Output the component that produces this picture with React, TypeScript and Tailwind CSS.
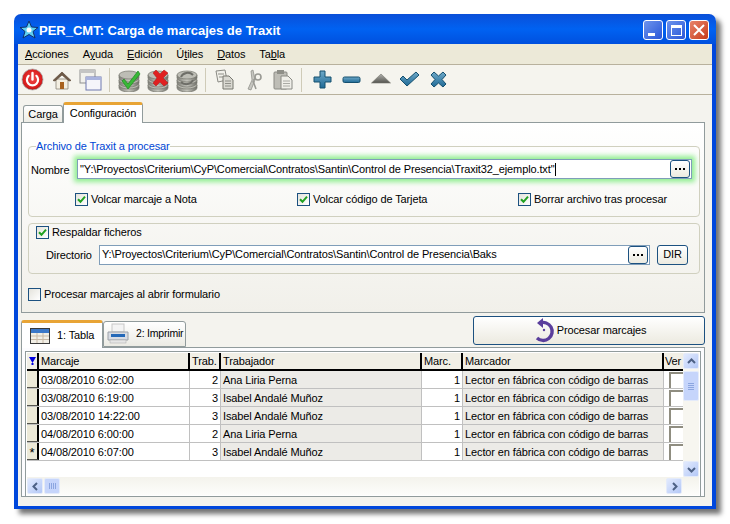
import React from "react";

const rows = [
	["03/08/2010 6:02:00", "2", "Ana Liria Perna"],
	["03/08/2010 6:19:00", "3", "Isabel Andalé Muñoz"],
	["03/08/2010 14:22:00", "3", "Isabel Andalé Muñoz"],
	["04/08/2010 6:00:00", "2", "Ana Liria Perna"],
	["04/08/2010 6:07:00", "3", "Isabel Andalé Muñoz"],
];

const cols = "grid grid-cols-[12px_151px_31px_201px_41px_201px_20px]";

const Check = ({ checked = true }: { checked?: boolean }) => (
	<span className="flex h-[13px] w-[13px] shrink-0 items-center justify-center border border-[#1C5180] bg-gradient-to-br from-[#E4E3DC] to-white">
		{checked && (
			<svg width="9" height="9" viewBox="0 0 9 9">
				<path d="M1 4.2 L3.5 6.8 L8 1.6" fill="none" stroke="#21A121" strokeWidth="2" />
			</svg>
		)}
	</span>
);

const Dots = () => (
	<span className="flex h-[18px] w-[20px] shrink-0 items-center justify-center gap-[2px] rounded-[3px] border border-[#1C5180] bg-gradient-to-b from-white to-[#ECEAE0]">
		<i className="h-[2px] w-[2px] bg-black" />
		<i className="h-[2px] w-[2px] bg-black" />
		<i className="h-[2px] w-[2px] bg-black" />
	</span>
);

const DbStack = ({ children }: { children?: React.ReactNode }) => (
	<svg width="24" height="24" viewBox="0 0 24 24">
		<defs>
			<linearGradient id="dbg" x1="0" x2="1" y1="0" y2="0">
				<stop offset="0" stopColor="#7E7E78" />
				<stop offset="0.5" stopColor="#C4C4BC" />
				<stop offset="1" stopColor="#6E6E68" />
			</linearGradient>
		</defs>
		{[15, 10, 5].map((y) => (
			<g key={y}>
				<path d={`M2 ${y + 2} v3 a10 4 0 0 0 20 0 v-3 z`} fill="url(#dbg)" stroke="#77776F" strokeWidth="0.7" />
				<ellipse cx="12" cy={y + 2} rx="10" ry="4" fill="#BDBDB5" stroke="#77776F" strokeWidth="0.7" />
			</g>
		))}
		{children}
	</svg>
);

const BlueDefs = () => (
	<defs>
		<linearGradient id="blu" x1="0" x2="0" y1="0" y2="1">
			<stop offset="0" stopColor="#6FA9C8" />
			<stop offset="1" stopColor="#1F6A96" />
		</linearGradient>
	</defs>
);

const Sep = () => <span className="mx-[4px] h-[24px] w-px bg-[#CFCBB8]" />;

const Tool = ({ children }: { children: React.ReactNode }) => (
	<span className="flex h-[26px] w-[29px] items-center justify-center">{children}</span>
);

const Toolbar = () => (
	<div className="flex h-[30px] items-center border-b border-[#B8B19D] bg-[#F5F4EE]">
		<Tool>
			<svg width="23" height="23" viewBox="0 0 23 23">
				<defs>
					<radialGradient id="pw" cx="0.5" cy="0.45" r="0.6">
						<stop offset="0" stopColor="#F04A4A" />
						<stop offset="0.75" stopColor="#D81C1C" />
						<stop offset="1" stopColor="#8E1010" />
					</radialGradient>
				</defs>
				<circle cx="11.5" cy="11.5" r="10.5" fill="url(#pw)" stroke="#A8A8A8" strokeWidth="0.8" />
				<path d="M7.6 7.8 a5.6 5.6 0 1 0 7.8 0" fill="none" stroke="#fff" strokeWidth="2.2" strokeLinecap="round" />
				<path d="M11.5 5 v6.5" stroke="#fff" strokeWidth="2.4" strokeLinecap="round" />
			</svg>
		</Tool>
		<Tool>
			<svg width="20" height="20" viewBox="0 0 20 20">
				<path d="M4 9 h12 v10 h-12 z" fill="#F4EFE2" stroke="#8B8578" strokeWidth="0.8" />
				<path d="M1 10.5 L10 2 L19 10.5 L17 11 L10 5 L3 11 z" fill="#6E5A48" stroke="#5E4A3A" strokeWidth="0.7" />
				<rect x="8" y="12" width="4" height="7" fill="#A8611E" />
			</svg>
		</Tool>
		<Tool>
			<svg width="23" height="22" viewBox="0 0 23 22">
				<rect x="1" y="1" width="15" height="13" fill="#F2F1EC" stroke="#8F8F8F" />
				<rect x="1" y="1" width="15" height="3" fill="#C4C4C4" />
				<rect x="7" y="8" width="15" height="13" fill="#F5F5FA" stroke="#6F78B0" />
				<rect x="7" y="8" width="15" height="3" fill="#A9B3DE" />
			</svg>
		</Tool>
		<Sep />
		<Tool>
			<DbStack>
				<path d="M7 11 L11 16 L21 3 L23 6 L11 21 L5 13 z" fill="#38B838" stroke="#1E8A1E" strokeWidth="0.7" />
			</DbStack>
		</Tool>
		<Tool>
			<DbStack>
				<path d="M7 5 L10 2 L14 6 L18 2 L22 5 L17 10 L22 15 L18 18 L14 14 L10 18 L7 15 L11 10 z" fill="#E02020" stroke="#B01414" strokeWidth="0.5" />
			</DbStack>
		</Tool>
		<Tool>
			<DbStack>
				<path d="M6 9 a7 6 0 0 1 12 -2 M18 12 a7 6 0 0 1 -12 2" fill="none" stroke="#6E6E68" strokeWidth="2" />
			</DbStack>
		</Tool>
		<Sep />
		<Tool>
			<svg width="20" height="21" viewBox="0 0 20 21">
				<path d="M1 2 L10 1 L12 11 L3 13 z" fill="#F1F0EA" stroke="#8A8A84" />
				<path d="M8 7 h6 l4 4 v9 h-10 z" fill="#DAD9D2" stroke="#77776F" />
				<path d="M10 12 h6 M10 14.5 h6 M10 17 h6 M3 5 h6 M4 8 h4" stroke="#8F8F88" />
			</svg>
		</Tool>
		<Tool>
			<svg width="16" height="22" viewBox="0 0 16 22">
				<path d="M7 1 L9 11 L5 21 L2 20 L6 11 L5 2 z" fill="#C6C6C0" stroke="#8A8A84" strokeWidth="0.7" />
				<circle cx="12" cy="8" r="3" fill="none" stroke="#9A9A94" strokeWidth="1.6" />
				<path d="M9.5 9.5 L7 11.5 M7 12 L10 20" stroke="#9A9A94" strokeWidth="1.6" />
			</svg>
		</Tool>
		<Tool>
			<svg width="20" height="21" viewBox="0 0 20 21">
				<rect x="1" y="3" width="13" height="17" rx="1" fill="#BEBDB6" stroke="#8A8A84" />
				<rect x="4" y="1" width="7" height="4" fill="#8F8F88" />
				<path d="M8 7 h7 l4 4 v9 h-11 z" fill="#F0EFE9" stroke="#8A8A84" />
				<path d="M10 12 h7 M10 14.5 h7 M10 17 h7" stroke="#AAAAA4" />
			</svg>
		</Tool>
		<Sep />
		<span className="w-[2px]" />
		<Tool>
			<svg width="19" height="19" viewBox="0 0 19 19">
				<BlueDefs />
				<path d="M7 1 h5 v6 h6 v5 h-6 v6 h-5 v-6 h-6 v-5 h6 z" fill="url(#blu)" stroke="#15506F" strokeLinejoin="round" />
			</svg>
		</Tool>
		<Tool>
			<svg width="19" height="19" viewBox="0 0 19 19">
				<rect x="1" y="7" width="17" height="5.5" rx="1.5" fill="url(#blu)" stroke="#15506F" />
			</svg>
		</Tool>
		<Tool>
			<svg width="20" height="19" viewBox="0 0 20 19">
				<defs>
					<linearGradient id="tri" x1="0" x2="0" y1="0" y2="1">
						<stop offset="0" stopColor="#B0B0AC" />
						<stop offset="1" stopColor="#55554F" />
					</linearGradient>
				</defs>
				<path d="M10 4 L19.5 13 H0.5 z" fill="url(#tri)" stroke="#77776F" strokeWidth="0.6" strokeLinejoin="round" />
			</svg>
		</Tool>
		<Tool>
			<svg width="21" height="19" viewBox="0 0 21 19">
				<path d="M1 9 L4 6 L8 10 L17 2 L20 5 L8 16 z" fill="url(#blu)" stroke="#15506F" strokeLinejoin="round" />
			</svg>
		</Tool>
		<Tool>
			<svg width="17" height="17" viewBox="0 0 17 17">
				<path d="M4 1 L8.5 5 L13 1 L16 4 L12 8.5 L16 13 L13 16 L8.5 12 L4 16 L1 13 L5 8.5 L1 4 z" fill="url(#blu)" stroke="#15506F" strokeLinejoin="round" />
			</svg>
		</Tool>
	</div>
);

const ScrollBtn = ({ d }: { d: string }) => (
	<span className="flex h-[16px] w-[16px] shrink-0 items-center justify-center rounded-[2px] border border-[#E4EBFA] bg-gradient-to-br from-[#E2EAFE] to-[#B4C8F6]">
		<svg width="9" height="9" viewBox="0 0 9 9">
			<path d={d} fill="none" stroke="#4D6185" strokeWidth="2" />
		</svg>
	</span>
);

const Grip = ({ vertical = false }: { vertical?: boolean }) =>
	vertical ? (
		<span className="flex flex-col gap-px">
			<i className="h-px w-[6px] bg-[#8CA6E0]" />
			<i className="h-px w-[6px] bg-[#8CA6E0]" />
			<i className="h-px w-[6px] bg-[#8CA6E0]" />
			<i className="h-px w-[6px] bg-[#8CA6E0]" />
		</span>
	) : (
		<span className="flex gap-px">
			<i className="h-[6px] w-px bg-[#8CA6E0]" />
			<i className="h-[6px] w-px bg-[#8CA6E0]" />
			<i className="h-[6px] w-px bg-[#8CA6E0]" />
			<i className="h-[6px] w-px bg-[#8CA6E0]" />
		</span>
	);

const Head = ({ children }: { children?: React.ReactNode }) => (
	<div className="flex items-center overflow-hidden whitespace-nowrap border-r-2 border-black pl-[2px] leading-none">{children}</div>
);

const Grid = () => (
	<div className="flex h-[146px] flex-col border border-[#919B9C] bg-white p-px">
		<div className="flex h-[124px]">
			<div className="w-[657px] overflow-hidden">
				<div className={`${cols} h-[18px] border-b-2 border-black bg-[#F1EFE6]`}>
					<div className="flex items-center justify-center border-r-2 border-black">
						<svg width="7" height="8" viewBox="0 0 7 8">
							<path d="M0 0 H7 L3.5 6 z M2.5 6 h2 v2 h-2 z" fill="#0000E0" />
						</svg>
					</div>
					<Head>Marcaje</Head>
					<Head>Trab.</Head>
					<Head>Trabajador</Head>
					<Head>Marc.</Head>
					<Head>Marcador</Head>
					<div className="overflow-hidden pl-[1px]">Ver</div>
				</div>
				{rows.map((r, i) => (
					<div key={i} className={`${cols} h-[18px] border-b border-[#C0C0C0]`}>
						<div className="flex items-center justify-center border-r-2 border-b border-r-black border-b-[#55554F] bg-[#ECE9D8] pt-[3px] text-[13px] leading-none">{i === 4 ? "*" : ""}</div>
						<div className="border-r border-[#C0C0C0] pl-[2px] pt-px leading-[16px]">{r[0]}</div>
						<div className="border-r border-[#C0C0C0] pr-[2px] pt-px text-right leading-[16px]">{r[1]}</div>
						<div className="border-r border-[#C0C0C0] bg-[#ECEBE7] pl-[2px] pt-px leading-[16px]">{r[2]}</div>
						<div className="border-r border-[#C0C0C0] pr-[2px] pt-px text-right leading-[16px]">1</div>
						<div className="border-r border-[#C0C0C0] bg-[#ECEBE7] pl-[2px] pt-px leading-[16px]">Lector en fábrica con código de barras</div>
						<div className="pl-[5px] pt-[1px]">
							<span className="block h-[16px] w-[20px] border-l-2 border-t-2 border-[#8F8D80] bg-white" />
						</div>
					</div>
				))}
			</div>
			<div className="flex w-[16px] flex-col bg-[#F7F6F0]">
				<ScrollBtn d="M1 6 L4.5 2.5 L8 6" />
				<div className="mt-[2px] flex h-[30px] items-center justify-center rounded-[2px] border border-[#E4EBFA] bg-[#C6D5FB]">
					<Grip vertical />
				</div>
				<div className="flex-1" />
				<ScrollBtn d="M1 3 L4.5 6.5 L8 3" />
			</div>
		</div>
		<div className="flex h-[18px] items-center bg-gradient-to-b from-[#F4F3EC] to-[#FDFDFB]">
			<ScrollBtn d="M6 1 L2.5 4.5 L6 8" />
			<div className="ml-px flex h-[16px] w-[16px] items-center justify-center rounded-[2px] border border-[#E4EBFA] bg-[#C6D5FB]">
				<Grip />
			</div>
			<div className="flex-1" />
			<ScrollBtn d="M3 1 L6.5 4.5 L3 8" />
			<div className="w-[17px]" />
		</div>
	</div>
);

const App = () => (
	<div className="h-[524px] w-[730px] overflow-hidden bg-white pl-[14px] pt-[14px] font-['Liberation_Sans',sans-serif] text-[11px] tracking-[-0.12px] text-black">
		<div className="flex h-[495px] w-[702px] flex-col rounded-t-[7px] shadow-[5px_5px_5px_rgba(0,0,0,0.55)]">
			{/* barra de título */}
			<div className="flex h-[30px] shrink-0 items-center rounded-t-[7px] bg-gradient-to-b from-[#0A4FD8] via-[#0062F2] to-[#0050DE] pl-[5px] pr-[7px] pt-[2px]">
				<svg width="20" height="20" viewBox="0 0 20 20">
					<path d="M10 1 L12.5 7 L19 7.5 L14 11.5 L16 18 L10 14.5 L4 18 L6 11.5 L1 7.5 L7.5 7 z" fill="#5FD0F0" stroke="#10306A" strokeWidth="1" />
					<circle cx="10" cy="10" r="2.5" fill="#fff" />
				</svg>
				<span className="flex-1 pt-px text-[13px] font-bold tracking-normal text-white">PER_CMT: Carga de marcajes de Traxit</span>
				<div className="flex gap-[3px]">
					<span className="relative h-[20px] w-[20px] rounded-[3px] border border-white bg-gradient-to-br from-[#6E93EC] to-[#2A55D8]">
						<i className="absolute bottom-[3px] left-[4px] h-[3px] w-[7px] bg-white" />
					</span>
					<span className="flex h-[20px] w-[20px] items-center justify-center rounded-[3px] border border-white bg-gradient-to-br from-[#6E93EC] to-[#2A55D8]">
						<i className="h-[11px] w-[11px] border border-t-[3px] border-white" />
					</span>
					<span className="flex h-[20px] w-[20px] items-center justify-center rounded-[3px] border border-white bg-gradient-to-br from-[#E8836A] to-[#C63A14]">
						<svg width="12" height="12" viewBox="0 0 12 12">
							<path d="M1 1 L11 11 M11 1 L1 11" stroke="#fff" strokeWidth="2" />
						</svg>
					</span>
				</div>
			</div>
			<div className="flex min-h-0 flex-1 flex-col border-x-[4px] border-b-[3px] border-x-[#0047DC] border-b-[#0047DC]">
				{/* menú */}
				<div className="flex h-[21px] shrink-0 items-center gap-[14px] border-b border-[#B8B19D] bg-[#ECE9D8] pl-[7px] pt-px">
					<span><u>A</u>cciones</span>
					<span>A<u>y</u>uda</span>
					<span><u>E</u>dición</span>
					<span>Ú<u>t</u>iles</span>
					<span><u>D</u>atos</span>
					<span>Ta<u>b</u>la</span>
				</div>
				<Toolbar />
				<div className="flex min-h-0 flex-1 flex-col bg-[#F4F3EE] pl-[3px] pr-[7px]">
					{/* pestañas superiores */}
					<div className="flex h-[27px] shrink-0 items-end pl-[2px]">
						<div className="mb-[-1px] flex h-[18px] w-[40px] items-center justify-center rounded-t-[3px] border border-b-0 border-[#919B9C] bg-gradient-to-b from-white to-[#ECEBE4]">Carga</div>
						<div className="relative z-10 mb-[-1px] flex h-[21px] w-[80px] items-start justify-center rounded-t-[3px] border-x border-t-[3px] border-x-[#919B9C] border-t-[#E8A435] bg-white">Configuración</div>
					</div>
					<div className="flex h-[191px] shrink-0 flex-col border border-[#919B9C] bg-gradient-to-b from-white to-[#F1F0EA] pl-[6px] pr-[4px]">
						<fieldset className="mt-[18px] h-[76px] rounded-[4px] border border-[#D0D0BF]">
							<legend className="ml-[7px] leading-none text-[#0046D5]">Archivo de Traxit a procesar</legend>
							<div className="mt-[7px] flex items-center">
								<span className="ml-[2px] w-[46px] pt-[2px]">Nombre</span>
								<div className="flex h-[20px] w-[615px] items-center justify-between border border-[#7F9DB9] bg-white pl-[2px] pr-[1px] shadow-[0_0_5px_3px_#90EE90]">
									<span className="flex items-center">"Y:\Proyectos\Criterium\CyP\Comercial\Contratos\Santin\Control de Presencia\Traxit32_ejemplo.txt"<i className="ml-px h-[13px] w-px bg-black" /></span>
									<Dots />
								</div>
							</div>
							<div className="mt-[12px] flex items-center">
								<span className="ml-[46px] flex w-[222px] items-center gap-[3px]"><Check />Volcar marcaje a Nota</span>
								<span className="flex w-[221px] items-center gap-[3px]"><Check />Volcar código de Tarjeta</span>
								<span className="flex items-center gap-[3px]"><Check />Borrar archivo tras procesar</span>
							</div>
						</fieldset>
						<div className="mt-[6px] h-[51px] rounded-[4px] border border-[#D0D0BF] pl-[7px]">
							<div className="flex items-center gap-[3px]"><Check />Respaldar ficheros</div>
							<div className="mt-[4px] flex items-center">
								<span className="ml-[10px] w-[53px] pt-[2px]">Directorio</span>
								<div className="flex h-[20px] w-[551px] items-center justify-between border border-[#7F9DB9] bg-white pl-[2px] pr-[1px]">
									<span>Y:\Proyectos\Criterium\CyP\Comercial\Contratos\Santin\Control de Presencia\Baks</span>
									<Dots />
								</div>
								<span className="ml-[7px] flex h-[20px] w-[31px] items-center justify-center rounded-[3px] border border-[#1C5180] bg-gradient-to-b from-white to-[#ECEAE0]">DIR</span>
							</div>
						</div>
						<div className="mt-[12px] flex items-center gap-[3px]"><Check checked={false} />Procesar marcajes al abrir formulario</div>
					</div>
					{/* pestañas inferiores */}
					<div className="flex h-[34px] shrink-0 items-end justify-between">
						<div className="flex items-end">
							<div className="relative z-10 mb-[-1px] flex h-[28px] w-[82px] items-center rounded-t-[3px] border-x border-t-[3px] border-x-[#919B9C] border-t-[#E8A435] bg-white pl-[8px]">
								<svg width="20" height="16" viewBox="0 0 20 16" className="mr-[7px]">
									<rect x="0.5" y="0.5" width="19" height="15" fill="#F2EFE6" stroke="#3A3A3A" />
									<rect x="1" y="1" width="18" height="4" fill="#3C78C8" />
									<path d="M1 8 h18 M1 11.5 h18 M7 5 v10 M13 5 v10" stroke="#C9B9A6" />
								</svg>
								<span className="whitespace-nowrap">1: Tabla</span>
							</div>
							<div className="flex h-[26px] w-[83px] items-center whitespace-nowrap rounded-t-[3px] border border-[#919B9C] bg-gradient-to-b from-white to-[#ECEBE4] pl-[3px] text-[10.5px] tracking-[-0.2px]">
								<svg width="22" height="22" viewBox="0 0 22 22" className="mr-[7px] shrink-0">
									<rect x="5" y="1" width="12" height="8" fill="#F4F4F4" stroke="#C8C8C8" />
									<path d="M1 9 h20 v8 h-20 z" fill="#D8DCE4" stroke="#9CA0A8" />
									<rect x="4" y="11" width="14" height="3" fill="#2468B8" />
									<rect x="3" y="17" width="16" height="3" fill="#E6E6E6" stroke="#A8A8A8" strokeWidth="0.5" />
								</svg>
								2: Imprimir
							</div>
						</div>
						<div className="mb-[2px] flex h-[29px] w-[232px] items-center justify-center rounded-[3px] border border-[#1C5180] bg-gradient-to-b from-white to-[#ECEAE0] pl-[5px]">
							<svg width="20" height="25" viewBox="0 0 20 25" className="ml-[-2px] mr-[2px]">
								<path d="M5 5 A9 9 0 1 1 2 20" fill="none" stroke="#5A3E9C" strokeWidth="3.4" />
								<path d="M8 0 L8 10 L2 5 z" fill="#5A3E9C" />
								<circle cx="9" cy="12" r="1.2" fill="#5A3E9C" />
							</svg>
							Procesar marcajes
						</div>
					</div>
					<div className="flex h-[150px] shrink-0 flex-col border border-[#919B9C] bg-[#FCFCFE] px-[3px] pt-[3px]">
						<Grid />
					</div>
				</div>
			</div>
		</div>
	</div>
);

export default App;
